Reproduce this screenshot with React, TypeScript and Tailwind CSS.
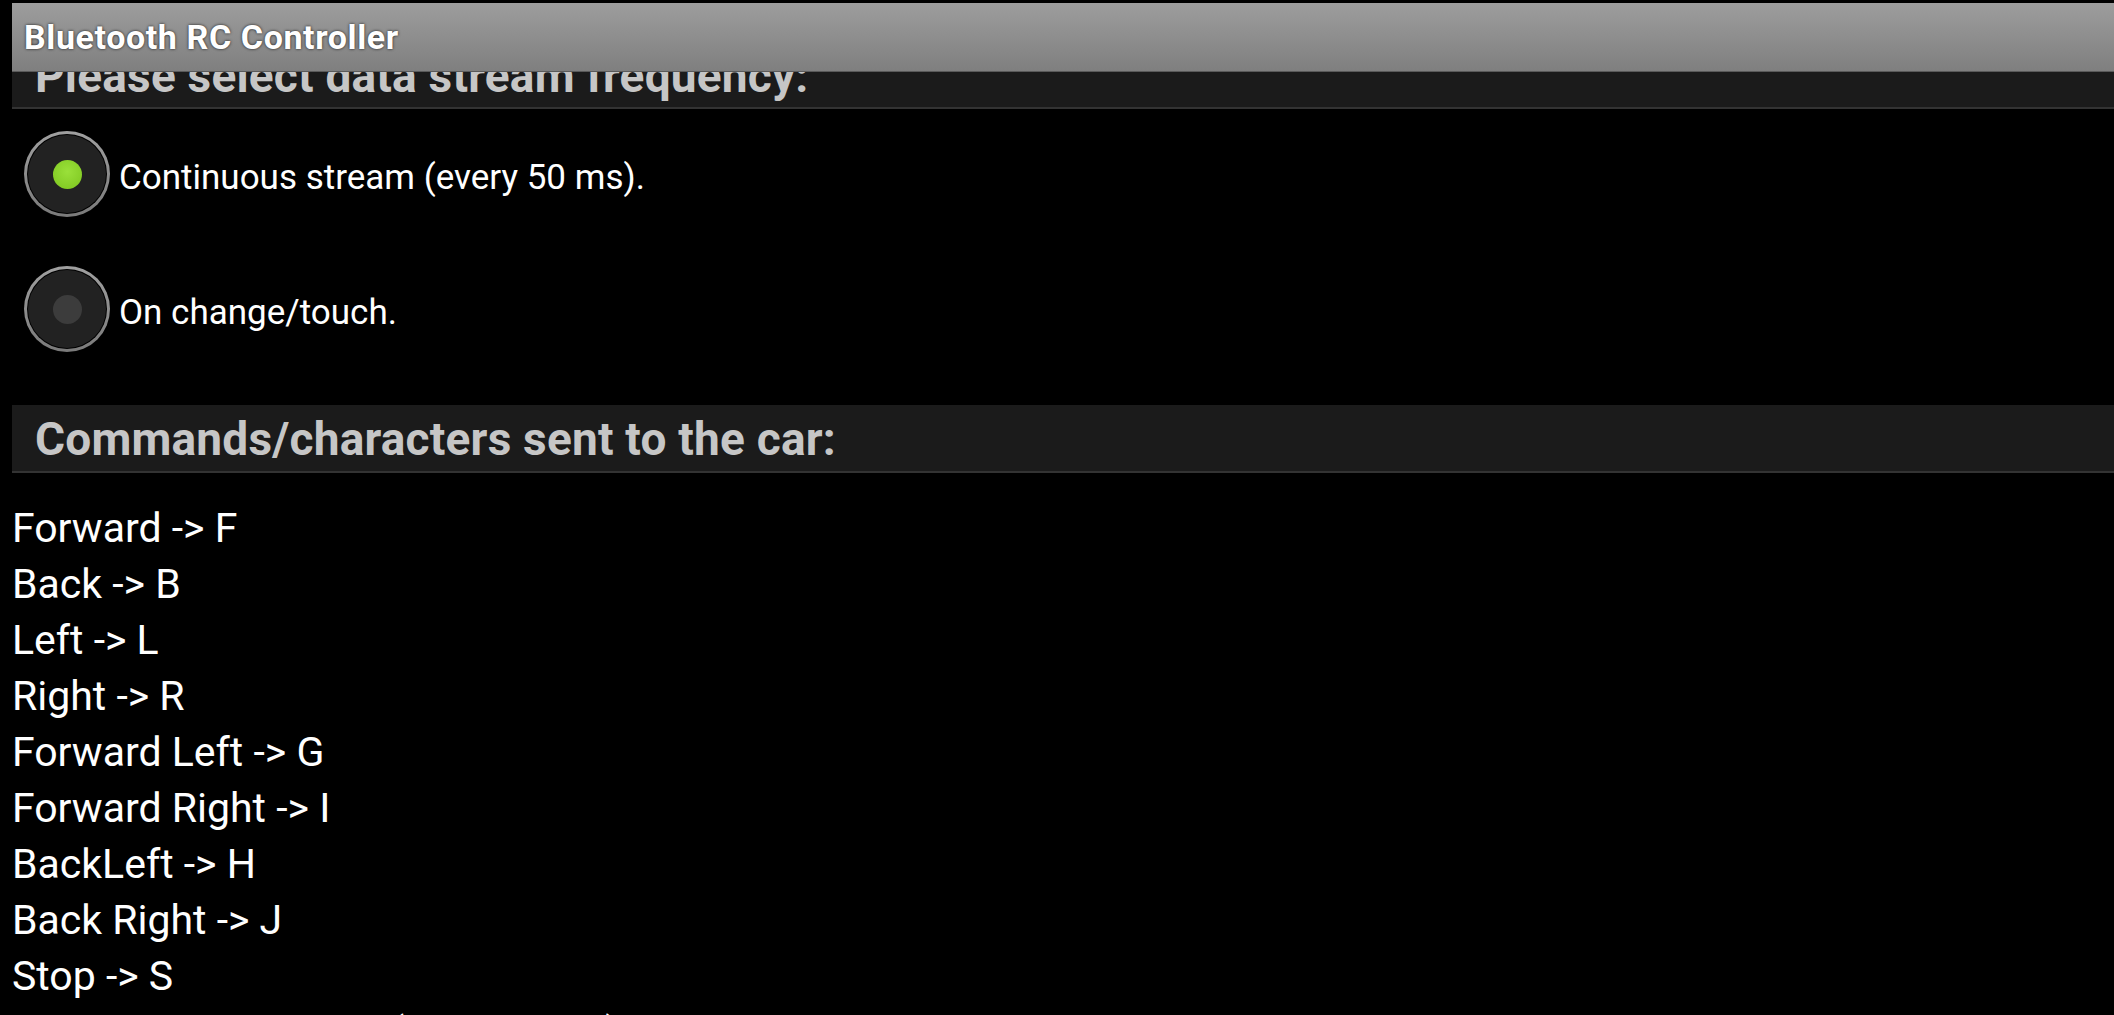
import React from "react";

const commands = [
  "Forward -> F",
  "Back -> B",
  "Left -> L",
  "Right -> R",
  "Forward Left -> G",
  "Forward Right -> I",
  "BackLeft -> H",
  "Back Right -> J",
  "Stop -> S",
  "Front Lights On -> W (upper case)",
  "Front Lights Off -> w (lower case)",
];

function Radio({ checked, label }: { checked: boolean; label: string }) {
  return (
    <div className="flex items-center">
      <div className="w-[88px] h-[88px] rounded-full bg-black p-[1px] flex">
        <div className="flex-1 rounded-full bg-[linear-gradient(#a0a0a0,#7a7a7a)] p-[3px] flex">
          <div className="flex-1 rounded-full bg-black p-[1px] flex">
            <div className="flex-1 rounded-full bg-[#222222] flex items-center justify-center">
              {checked ? (
                <div className="w-[29px] h-[29px] rounded-full bg-[radial-gradient(circle_at_50%_40%,#9ae03a,#7cc51e)]" />
              ) : (
                <div className="w-[29px] h-[29px] rounded-full bg-[#3c3c3c]" />
              )}
            </div>
          </div>
        </div>
      </div>
      <span className="ml-[8px] pt-[7px] text-white text-[35px] leading-none">{label}</span>
    </div>
  );
}

export default function App() {
  return (
    <div
      className="w-full h-[1015px] overflow-hidden bg-black"
      style={{ fontFamily: "Roboto, 'Noto Sans', sans-serif" }}
    >
      <div className="ml-[12px] mt-[3px] h-[69px] bg-[linear-gradient(#9d9d9d,#7f7f7f)] border-b border-[#5a5a5a] flex items-center pl-[12px]">
        <span className="text-white font-bold text-[34px] leading-none tracking-[0.6px] [text-shadow:0_0_3px_rgba(0,0,0,0.85)]">
          Bluetooth RC Controller
        </span>
      </div>

      <div className="ml-[12px] h-[37px] overflow-hidden bg-[#1b1b1b] border-b-2 border-[#333333]">
        <div className="h-[66px] mt-[-31px] flex items-center pl-[23px] pt-[3px]">
          <span className="text-[#c6c6c6] font-bold text-[46px] leading-none tracking-[0.2px]">
            Please select data stream frequency:
          </span>
        </div>
      </div>

      <div className="pl-[23px] pt-[21px] flex flex-col gap-[47px]">
        <Radio checked={true} label="Continuous stream (every 50 ms)." />
        <Radio checked={false} label="On change/touch." />
      </div>

      <div className="ml-[12px] mt-[52px] h-[68px] bg-[#1b1b1b] border-b-2 border-[#333333] flex items-center pl-[23px] pt-[2px]">
        <span className="text-[#c6c6c6] font-bold text-[46px] leading-none tracking-[0.2px]">
          Commands/characters sent to the car:
        </span>
      </div>

      <div className="pl-[12px] pt-[27px] text-white text-[41px] leading-[56px]">
        {commands.map((c) => (
          <div key={c}>{c}</div>
        ))}
      </div>
    </div>
  );
}
